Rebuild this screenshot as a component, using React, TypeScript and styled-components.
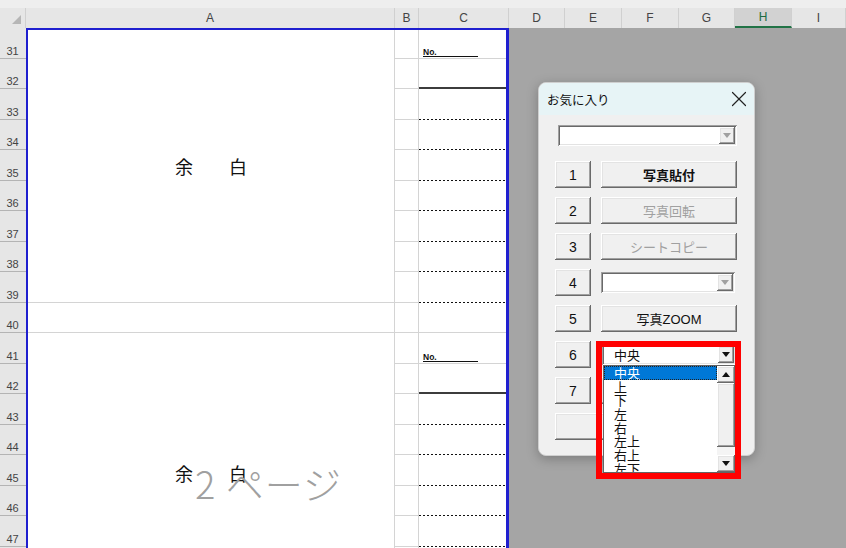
import React from "react";
import styled, { createGlobalStyle, css } from "styled-components";
import { X } from "lucide-react";

const Global = createGlobalStyle`
  html, body { margin: 0; padding: 0; }
  body {
    width: 846px; height: 548px; overflow: hidden;
    font-family: "Liberation Sans", "Noto Sans CJK JP", sans-serif;
  }
  * { box-sizing: border-box; }
`;

const GRID = "#d4d4d4";
const BLUE = "#1f1fcf";

const Page = styled.div`
  position: relative;
  width: 846px;
  height: 548px;
  overflow: hidden;
  background: #a5a5a5;
  display: flex;
  flex-direction: column;
`;

const TopStrip = styled.div`
  flex: none;
  height: 8px;
  background: #eeeeee;
`;

const ColHeaderRow = styled.div`
  flex: none;
  display: grid;
  grid-template-columns: 26px 369px 24px 90px 56px 57px 57px 56px 57px 1fr;
  height: 20px;
  background: #e6e6e6;
`;

const ColHead = styled.div<{ $selected?: boolean }>`
  display: flex;
  align-items: center;
  justify-content: center;
  font-size: 12px;
  color: #444;
  border-right: 1px solid #d0d0d0;
  ${(p) =>
    p.$selected &&
    css`
      background: #d2d2d2;
      color: #1e6b40;
      border-bottom: 2px solid #217346;
    `}
`;

const Corner = styled.div`
  display: flex;
  align-items: flex-end;
  justify-content: flex-end;
  padding: 0 4px 4px 0;
  border-right: 1px solid #d0d0d0;
`;

const SheetBody = styled.div`
  flex: none;
  display: flex;
  align-items: flex-start;
`;

const RowHeaders = styled.div`
  width: 26px;
  display: flex;
  flex-direction: column;
  background: #e6e6e6;
`;

const RowNum = styled.div`
  height: 30.5px;
  display: flex;
  align-items: flex-end;
  justify-content: center;
  padding: 0 1px 1px 0;
  font-size: 11px;
  color: #444;
  border-bottom: 1px solid #b4b4b4;
`;

const PrintArea = styled.div`
  width: 483px;
  display: flex;
  background: #fff;
  border-left: 2px solid ${BLUE};
  border-top: 2px solid ${BLUE};
  border-right: 3px solid ${BLUE};
`;

const ColA = styled.div`
  width: 367px;
  display: flex;
  flex-direction: column;
  border-right: 1px solid ${GRID};
`;

const MergedBlock = styled.div<{ $h: number; $padTop?: number; $line?: boolean }>`
  position: relative;
  height: ${(p) => p.$h}px;
  display: flex;
  align-items: center;
  justify-content: center;
  padding-top: ${(p) => p.$padTop ?? 0}px;
  font-family: "Noto Sans CJK JP", sans-serif;
  font-size: 18px;
  color: #111;
  ${(p) => p.$line && css`border-bottom: 1px solid ${GRID};`}
`;

const Watermark = styled.div`
  position: absolute;
  left: 167px;
  top: 131px;
  font-family: "Noto Sans CJK JP", sans-serif;
  font-weight: 300;
  font-size: 38px;
  line-height: 1;
  letter-spacing: 1px;
  color: #a0a0a0;
  white-space: nowrap;
`;

const ColB = styled.div`
  width: 24px;
  display: flex;
  flex-direction: column;
  border-right: 1px solid ${GRID};
`;

const BCell = styled.div<{ $first?: boolean }>`
  height: ${(p) => (p.$first ? 28.5 : 30.5)}px;
  border-bottom: 1px solid ${GRID};
`;

const ColC = styled.div`
  flex: 1;
  display: flex;
  flex-direction: column;
`;

type CKind = "no" | "solid" | "dotted" | "light" | "none";

const CCell = styled.div<{ $kind: CKind; $first?: boolean }>`
  height: ${(p) => (p.$first ? 28.5 : 30.5)}px;
  display: flex;
  align-items: flex-end;
  padding: 0 0 1px 4px;
  ${(p) => (p.$kind === "no" || p.$kind === "light") && css`border-bottom: 1px solid ${GRID};`}
  ${(p) => p.$kind === "solid" && css`border-bottom: 2px solid #3c3c3c;`}
  ${(p) =>
    p.$kind === "dotted" &&
    css`
      background-image: linear-gradient(to right, #111 50%, transparent 50%);
      background-size: 4px 1px;
      background-repeat: repeat-x;
      background-position: left bottom;
    `}
`;

const NoLabel = styled.span`
  width: 55px;
  font-size: 8.5px;
  font-weight: 700;
  line-height: 8px;
  color: #111;
  border-bottom: 1px solid #111;
`;

/* ---------- dialog ---------- */

const Dialog = styled.div`
  position: absolute;
  left: 538px;
  top: 82px;
  width: 217px;
  height: 374px;
  display: flex;
  flex-direction: column;
  background: #f0f0f0;
  border: 1px solid #cfcfcf;
  border-radius: 8px;
  box-shadow: 0 3px 12px rgba(0, 0, 0, 0.25);
  font-family: "Liberation Sans", "Noto Sans CJK JP", sans-serif;
`;

const TitleBar = styled.div`
  flex: none;
  height: 32px;
  display: flex;
  align-items: center;
  justify-content: space-between;
  padding: 0 2px 0 8px;
  background: #e7f4f6;
  border-radius: 7px 7px 0 0;
`;

const Title = styled.span`
  font-family: "Noto Sans CJK JP", sans-serif;
  font-size: 12.5px;
  color: #111;
`;

const DialogBody = styled.div`
  display: flex;
  flex-direction: column;
  align-items: flex-start;
  padding: 10px 16px 0 16px;
`;

const ButtonGrid = styled.div`
  margin-top: 15px;
  display: grid;
  grid-template-columns: 36px 136px;
  grid-auto-rows: 27px;
  column-gap: 10px;
  row-gap: 9px;
`;

const raised = css`
  background: #f0f0f0;
  box-shadow: inset -1px -1px #6a6a6a, inset 1px 1px #ffffff, inset -2px -2px #a0a0a0,
    inset 2px 2px #e3e3e3;
`;

const Btn = styled.div<{ $disabled?: boolean; $bold?: boolean; $wide?: boolean; $num?: boolean }>`
  ${raised};
  display: flex;
  align-items: center;
  justify-content: center;
  font-size: ${(p) => (p.$num ? 14 : 13)}px;
  font-weight: ${(p) => (p.$bold ? 700 : 400)};
  color: ${(p) => (p.$disabled ? "#a0a0a0" : "#111")};
  ${(p) => p.$wide && css`grid-column: 1 / -1;`}
`;

const Combo = styled.div<{ $w: number; $ml?: number }>`
  position: relative;
  width: ${(p) => p.$w}px;
  height: 21px;
  margin-left: ${(p) => p.$ml ?? 0}px;
  align-self: center;
  display: flex;
  align-items: center;
  justify-content: space-between;
  padding: 2px;
  background: #fff;
  box-shadow: inset 1px 1px #a0a0a0, inset -1px -1px #ffffff, inset 2px 2px #696969,
    inset -2px -2px #e3e3e3;
`;

const ComboValue = styled.span`
  padding-left: 10px;
  font-family: "Noto Sans CJK JP", sans-serif;
  font-size: 13px;
  line-height: 16px;
  color: #111;
`;

const ArrowBtn = styled.div`
  ${raised};
  margin-left: auto;
  width: 16px;
  height: 17px;
  display: flex;
  align-items: center;
  justify-content: center;
`;

const DropList = styled.div`
  position: absolute;
  left: 1px;
  top: 100%;
  width: 133px;
  height: 108px;
  display: flex;
  background: #fff;
  border: 1px solid #646464;
  z-index: 2;
`;

const Items = styled.div`
  flex: 1;
  overflow: hidden;
  display: flex;
  flex-direction: column;
`;

const Item = styled.div<{ $sel?: boolean }>`
  flex: none;
  height: 13.7px;
  line-height: 13.7px;
  padding-left: 10px;
  font-family: "Noto Sans CJK JP", sans-serif;
  font-size: 13px;
  color: #111;
  white-space: nowrap;
  ${(p) =>
    p.$sel &&
    css`
      background: #0078d7;
      color: #fff;
      outline: 1px dotted #222;
      outline-offset: -1px;
    `}
`;

const ScrollBar = styled.div`
  width: 18px;
  display: flex;
  flex-direction: column;
  background: #f0f0f0;
`;

const ScrollBtn = styled.div`
  ${raised};
  flex: none;
  height: 17px;
  display: flex;
  align-items: center;
  justify-content: center;
`;

const Thumb = styled.div`
  ${raised};
  flex: none;
  height: 64px;
`;

const Track = styled.div`
  flex: 1;
  background: #f4f4f4;
`;

const RedBox = styled.div`
  position: absolute;
  left: 596px;
  top: 341px;
  width: 145px;
  height: 138px;
  border: 6px solid #ff0000;
  pointer-events: none;
  z-index: 5;
`;

const Tri = ({ color, up }: { color: string; up?: boolean }) => (
  <svg width="8" height="5" viewBox="0 0 8 5">
    <polygon points={up ? "0,5 8,5 4,0" : "0,0 8,0 4,5"} fill={color} />
  </svg>
);

const rows = Array.from({ length: 19 }, (_, i) => 31 + i);
const cKinds: CKind[] = [
  "no", "solid", "dotted", "dotted", "dotted", "dotted", "dotted", "dotted", "dotted",
  "light", "no", "solid", "dotted", "dotted", "dotted", "dotted", "dotted", "dotted", "dotted",
];
const cols = ["A", "B", "C", "D", "E", "F", "G", "H", "I"];
const listItems = ["中央", "上", "下", "左", "右", "左上", "右上", "左下", "右下"];

export default function App() {
  return (
    <>
      <Global />
      <Page>
        <TopStrip />
        <ColHeaderRow>
          <Corner>
            <svg width="9" height="9" viewBox="0 0 9 9">
              <polygon points="9,0 9,9 0,9" fill="#b6b6b6" />
            </svg>
          </Corner>
          {cols.map((c) => (
            <ColHead key={c} $selected={c === "H"}>
              {c}
            </ColHead>
          ))}
        </ColHeaderRow>
        <SheetBody>
          <RowHeaders>
            {rows.map((r) => (
              <RowNum key={r}>{r}</RowNum>
            ))}
          </RowHeaders>
          <PrintArea>
            <ColA>
              <MergedBlock $h={272.5} $line>
                余　　白
              </MergedBlock>
              <MergedBlock $h={30.5} $line />
              <MergedBlock $h={274.5} $padTop={5}>
                余　　白
                <Watermark>2 ページ</Watermark>
              </MergedBlock>
            </ColA>
            <ColB>
              {rows.map((r, i) => (
                <BCell key={r} $first={i === 0} />
              ))}
            </ColB>
            <ColC>
              {rows.map((r, i) => (
                <CCell key={r} $kind={cKinds[i]} $first={i === 0}>
                  {cKinds[i] === "no" && <NoLabel>No.</NoLabel>}
                </CCell>
              ))}
            </ColC>
          </PrintArea>
        </SheetBody>

        <Dialog>
          <TitleBar>
            <Title>お気に入り</Title>
            <X size={26} strokeWidth={1.1} color="#222" />
          </TitleBar>
          <DialogBody>
            <Combo $w={179} $ml={1}>
              <ArrowBtn>
                <Tri color="#a0a0a0" />
              </ArrowBtn>
            </Combo>
            <ButtonGrid>
              <Btn $num>1</Btn>
              <Btn $bold>写真貼付</Btn>
              <Btn $num>2</Btn>
              <Btn $disabled>写真回転</Btn>
              <Btn $num>3</Btn>
              <Btn $disabled>シートコピー</Btn>
              <Btn $num>4</Btn>
              <Combo $w={134}>
                <ArrowBtn>
                  <Tri color="#a0a0a0" />
                </ArrowBtn>
              </Combo>
              <Btn $num>5</Btn>
              <Btn>写真ZOOM</Btn>
              <Btn $num>6</Btn>
              <Combo $w={134} $ml={1}>
                <ComboValue>中央</ComboValue>
                <ArrowBtn>
                  <Tri color="#111" />
                </ArrowBtn>
                <DropList>
                  <Items>
                    {listItems.map((it, i) => (
                      <Item key={it} $sel={i === 0}>
                        {it}
                      </Item>
                    ))}
                  </Items>
                  <ScrollBar>
                    <ScrollBtn>
                      <Tri color="#111" up />
                    </ScrollBtn>
                    <Thumb />
                    <Track />
                    <ScrollBtn>
                      <Tri color="#111" />
                    </ScrollBtn>
                  </ScrollBar>
                </DropList>
              </Combo>
              <Btn $num>7</Btn>
              <Btn />
              <Btn $wide />
            </ButtonGrid>
          </DialogBody>
        </Dialog>
        <RedBox />
      </Page>
    </>
  );
}
